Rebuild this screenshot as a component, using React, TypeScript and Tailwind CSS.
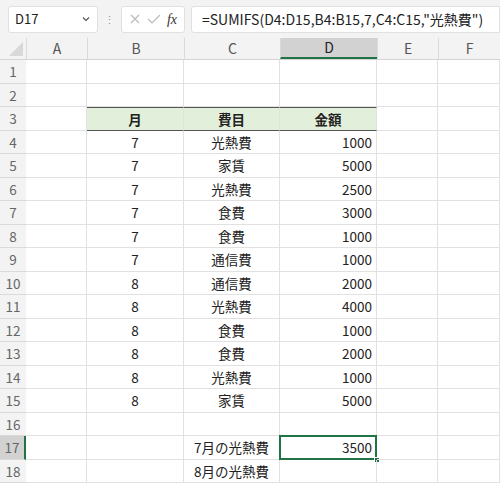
import React from "react";

const cols = [
  { k: "A", w: 61 },
  { k: "B", w: 97 },
  { k: "C", w: 96 },
  { k: "D", w: 97 },
  { k: "E", w: 61 },
  { k: "F", w: 62 },
];
const data: [string, string, string][] = [
  ["7", "光熱費", "1000"],
  ["7", "家賃", "5000"],
  ["7", "光熱費", "2500"],
  ["7", "食費", "3000"],
  ["7", "食費", "1000"],
  ["7", "通信費", "1000"],
  ["8", "通信費", "2000"],
  ["8", "光熱費", "4000"],
  ["8", "食費", "1000"],
  ["8", "食費", "2000"],
  ["8", "光熱費", "1000"],
  ["8", "家賃", "5000"],
];

export default function App() {
  const font = { fontFamily: '"Noto Sans CJK JP", "Noto Sans", sans-serif' };
  const rows = Array.from({ length: 18 }, (_, i) => i + 1);
  const cell = (r: number, c: string): { t: string; cls: string } => {
    if (r === 3) {
      const m: Record<string, string> = { B: "月", C: "費目", D: "金額" };
      if (m[c]) return { t: m[c], cls: "justify-center font-bold" };
    }
    if (r >= 4 && r <= 15) {
      const d = data[r - 4];
      if (c === "B") return { t: d[0], cls: "justify-center" };
      if (c === "C") return { t: d[1], cls: "justify-center" };
      if (c === "D") return { t: d[2], cls: "justify-end pr-1" };
    }
    if (r === 17 && c === "C") return { t: "7月の光熱費", cls: "justify-center" };
    if (r === 18 && c === "C") return { t: "8月の光熱費", cls: "justify-center" };
    if (r === 17 && c === "D") return { t: "3500", cls: "justify-end pr-1" };
    return { t: "", cls: "" };
  };
  return (
    <div className="w-[500px] h-[489px] bg-white overflow-hidden text-[#222]" style={font}>
      <div className="h-[38px] bg-[#f3f3f3] flex items-center gap-[6px] pl-[8px]">
        <div className="w-[90px] h-[27px] bg-white border border-[#e0e0e0] rounded-[3px] flex items-center justify-between px-[6px] text-[13px]">
          <span>D17</span>
          <svg width="10" height="10" viewBox="0 0 10 10"><path d="M2 3.5 L5 6.5 L8 3.5" stroke="#555" fill="none" strokeWidth="1.2" /></svg>
        </div>
        <span className="text-[#999] text-[11px]">⋮</span>
        <div className="w-[64px] h-[27px] bg-white border border-[#e0e0e0] rounded-[3px] flex items-center justify-around px-[4px]">
          <svg width="12" height="12" viewBox="0 0 12 12"><path d="M2 2 L10 10 M10 2 L2 10" stroke="#bbb" strokeWidth="1.2" /></svg>
          <svg width="14" height="12" viewBox="0 0 14 12"><path d="M1 6 L5 10 L13 2" stroke="#bbb" fill="none" strokeWidth="1.2" /></svg>
          <span className="italic font-serif text-[14px] text-[#333]" style={{ fontFamily: '"Liberation Serif", serif' }}>fx</span>
        </div>
        <div className="flex-1 h-[27px] bg-white border border-[#e0e0e0] rounded-l-[3px] flex items-center pl-[10px] text-[14px]">
          =SUMIFS(D4:D15,B4:B15,7,C4:C15,"光熱費")
        </div>
      </div>
      <div className="flex h-[22px] bg-[#f3f3f3] text-[14px] text-[#555] border-b border-[#d4d4d4]">
        <div className="w-[26px] relative">
          <svg className="absolute right-[3px] bottom-[3px]" width="14" height="14" viewBox="0 0 14 14"><path d="M14 0 L14 14 L0 14 Z" fill="#d8d8d8" /></svg>
        </div>
        {cols.map((c) => (
          <div
            key={c.k}
            style={{ width: c.w }}
            className={`flex items-center justify-center border-l border-[#dadada] ${c.k === "D" ? "bg-[#d2d2d2] border-b-2 border-b-[#217346] text-[#222]" : ""}`}
          >
            {c.k}
          </div>
        ))}
      </div>
      {rows.map((r) => (
        <div key={r} className="flex h-[23.5px] text-[13.5px]">
          <div className={`w-[26px] flex items-center justify-center text-[#666] border-b border-[#dadada] ${r === 17 ? "bg-[#d2d2d2] border-r-2 border-r-[#217346] text-[#222]" : "bg-[#f3f3f3]"}`}>
            {r}
          </div>
          {cols.map((c) => {
            const { t, cls } = cell(r, c.k);
            const hdr = r === 3 && ["B", "C", "D"].includes(c.k);
            const sel = r === 17 && c.k === "D";
            return (
              <div
                key={c.k}
                style={{ width: c.w }}
                className={`relative flex items-center ${cls} border-r border-[#e1e1e1] ${hdr ? "bg-[#e2efda] border-t border-t-[#555] border-b border-b-[#555]" : "border-b border-b-[#e1e1e1]"}`}
              >
                {t}
                {sel && (
                  <>
                    <div className="absolute inset-[-1px] border-2 border-[#217346]" />
                    <div className="absolute right-[-4px] bottom-[-4px] w-[6px] h-[6px] bg-[#217346] border border-white" />
                  </>
                )}
              </div>
            );
          })}
        </div>
      ))}
    </div>
  );
}
